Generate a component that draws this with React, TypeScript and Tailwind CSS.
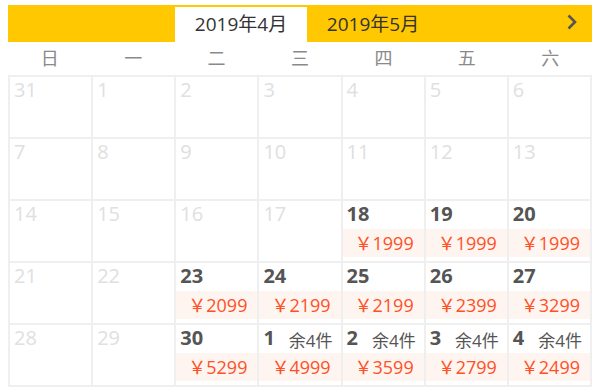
import React from "react";

type Cell = { d: number; active?: boolean; price?: string; stock?: string };

const rows: Cell[][] = [
  [{ d: 31 }, { d: 1 }, { d: 2 }, { d: 3 }, { d: 4 }, { d: 5 }, { d: 6 }],
  [{ d: 7 }, { d: 8 }, { d: 9 }, { d: 10 }, { d: 11 }, { d: 12 }, { d: 13 }],
  [
    { d: 14 },
    { d: 15 },
    { d: 16 },
    { d: 17 },
    { d: 18, active: true, price: "1999" },
    { d: 19, active: true, price: "1999" },
    { d: 20, active: true, price: "1999" },
  ],
  [
    { d: 21 },
    { d: 22 },
    { d: 23, active: true, price: "2099" },
    { d: 24, active: true, price: "2199" },
    { d: 25, active: true, price: "2199" },
    { d: 26, active: true, price: "2399" },
    { d: 27, active: true, price: "3299" },
  ],
  [
    { d: 28 },
    { d: 29 },
    { d: 30, active: true, price: "5299" },
    { d: 1, active: true, price: "4999", stock: "余4件" },
    { d: 2, active: true, price: "3599", stock: "余4件" },
    { d: 3, active: true, price: "2799", stock: "余4件" },
    { d: 4, active: true, price: "2499", stock: "余4件" },
  ],
];

const week = ["日", "一", "二", "三", "四", "五", "六"];

export default function App() {
  return (
    <div
      className="w-[600px] h-[389px] bg-white px-[8px] pt-[5px] overflow-hidden"
      style={{ fontFamily: '"Open Sans", "Noto Sans CJK SC", sans-serif' }}
    >
      <div className="relative flex h-[37px] items-end bg-[#ffc800]">
        <div className="w-[167px]" />
        <div className="flex h-[35px] w-[132px] items-center justify-center bg-white text-[19px] text-[#333]">
          2019年4月
        </div>
        <div className="flex h-[35px] w-[132px] items-center justify-center text-[19px] text-[#333]">
          2019年5月
        </div>
        <svg
          className="absolute right-[14px] top-[8px]"
          width="12"
          height="18"
          viewBox="0 0 12 18"
        >
          <polyline
            points="2.5,2.5 9,9 2.5,15.5"
            fill="none"
            stroke="#555"
            strokeWidth="2.6"
          />
        </svg>
      </div>
      <div className="grid h-[33px] grid-cols-7 items-center">
        {week.map((w) => (
          <div key={w} className="text-center text-[18px] text-[#8a8a8a]">
            {w}
          </div>
        ))}
      </div>
      <div className="grid grid-cols-7 gap-[2px] bg-[#efefef] p-[2px]">
        {rows.flat().map((c, i) => (
          <div key={i} className="flex h-[60px] flex-col bg-white">
            <div className="flex h-[28px] items-start justify-between pl-[4px] pr-[8px]">
              <span
                className={
                  c.active
                    ? "text-[20px] font-bold leading-[26px] text-[#555]"
                    : "text-[20px] leading-[26px] text-[#e0e0e0]"
                }
              >
                {c.d}
              </span>
              {c.stock && (
                <span className="mt-[4px] text-[17px] leading-[24px] text-[#555]">
                  {c.stock}
                </span>
              )}
            </div>
            {c.price && (
              <div className="flex h-[28px] items-center justify-end bg-[#fff5f0] pr-[10px] text-[18px] leading-[28px] text-[#ff5026]">
                <span>￥{c.price}</span>
              </div>
            )}
          </div>
        ))}
      </div>
    </div>
  );
}
